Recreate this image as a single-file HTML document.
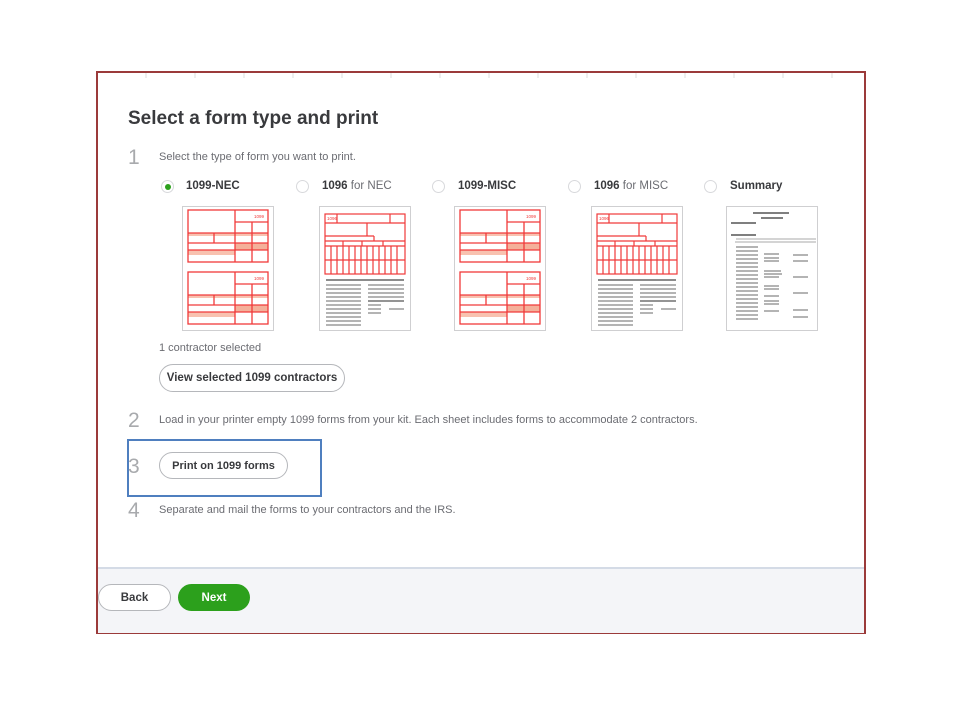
<!DOCTYPE html>
<html><head><meta charset="utf-8"><style>
body{margin:0;width:960px;height:720px;background:#fff;position:relative;overflow:hidden;font-family:"Liberation Sans",sans-serif;color:#393a3d}
.a{position:absolute;white-space:nowrap}
.frame{position:absolute;left:96px;top:71px;width:766px;height:559px;border:2px solid #9b3a3a;background:#fff}
.foot{position:absolute;left:98px;top:567px;width:766px;height:64px;background:#f4f5f8;border-top:2px solid #d4dbe6}
.num{font-size:21px;color:#a8aaad;font-weight:300}
.t{font-size:11px;color:#6b6c72}
.btn{position:absolute;border:1.5px solid #b5b7bb;border-radius:15px;background:#fff;font-size:11.5px;font-weight:bold;color:#393a3d;box-sizing:border-box;display:flex;align-items:center;justify-content:center}
.rad{position:absolute;width:13px;height:13px;border:1px solid #d8d9dc;border-radius:50%;box-sizing:border-box;background:#fff}
.lab{font-size:11.5px;font-weight:bold;color:#393a3d}
.lab span{font-weight:normal;color:#6b6c72}
.th{position:absolute;width:92px;height:125px;border:1.5px solid #cfcfd1;box-sizing:border-box;background:#fff}
</style></head><body>
<div class="frame"></div>
<div class="foot"></div>
<svg class="a" style="left:98px;top:73px" width="764" height="6"><g stroke="#ddd" stroke-width="1">
<line x1="48" y1="0" x2="48" y2="5"/><line x1="97" y1="0" x2="97" y2="5"/><line x1="146" y1="0" x2="146" y2="5"/><line x1="195" y1="0" x2="195" y2="5"/><line x1="244" y1="0" x2="244" y2="5"/><line x1="293" y1="0" x2="293" y2="5"/><line x1="342" y1="0" x2="342" y2="5"/><line x1="391" y1="0" x2="391" y2="5"/><line x1="440" y1="0" x2="440" y2="5"/><line x1="489" y1="0" x2="489" y2="5"/><line x1="538" y1="0" x2="538" y2="5"/><line x1="587" y1="0" x2="587" y2="5"/><line x1="636" y1="0" x2="636" y2="5"/><line x1="685" y1="0" x2="685" y2="5"/><line x1="734" y1="0" x2="734" y2="5"/></g></svg>

<div class="a" style="left:128px;top:108px;font-size:19px;font-weight:bold;color:#393a3d">Select a form type and print</div>
<div class="a num" style="left:128px;top:146px">1</div>
<div class="a t" style="left:159px;top:151px">Select the type of form you want to print.</div>

<div class="rad" style="left:161px;top:180px;"><div style="position:absolute;left:3px;top:3px;width:6px;height:6px;border-radius:50%;background:#2ca01c"></div></div>
<div class="a lab" style="left:186px;top:180px">1099-NEC</div>
<div class="rad" style="left:296px;top:180px"></div>
<div class="a lab" style="left:322px;top:180px">1096 <span>for NEC</span></div>
<div class="rad" style="left:432px;top:180px"></div>
<div class="a lab" style="left:458px;top:180px">1099-MISC</div>
<div class="rad" style="left:568px;top:180px"></div>
<div class="a lab" style="left:594px;top:180px">1096 <span>for MISC</span></div>
<div class="rad" style="left:704px;top:180px"></div>
<div class="a lab" style="left:730px;top:180px">Summary</div>

<svg width="0" height="0" style="position:absolute"><defs>
<g id="f99"><rect x="6" y="27" width="80" height="3" fill="#f8c2b0"/><rect x="53" y="37" width="33" height="7" fill="#f4b09a"/><rect x="6" y="44" width="47" height="5" fill="#f8c2b0"/>
<g fill="none" stroke="#f03a3a" stroke-width="1.3"><rect x="6" y="4" width="80" height="52"/><line x1="53" y1="4" x2="53" y2="56"/><line x1="70" y1="16" x2="70" y2="56"/><line x1="53" y1="16" x2="86" y2="16"/><line x1="6" y1="27" x2="86" y2="27"/><line x1="6" y1="37" x2="86" y2="37"/><line x1="6" y1="44" x2="86" y2="44"/><line x1="32" y1="27" x2="32" y2="37"/></g>
<text x="72" y="12" font-size="4.5" fill="#f03a3a" font-family="Liberation Sans">1099</text></g>
<g id="f96"><g fill="none" stroke="#f03a3a" stroke-width="1.2"><rect x="6" y="8" width="80" height="60"/><line x1="18" y1="8" x2="18" y2="17"/><line x1="6" y1="17" x2="86" y2="17"/><line x1="71" y1="8" x2="71" y2="17"/><line x1="48" y1="17" x2="48" y2="30"/><line x1="6" y1="30" x2="55" y2="30"/><line x1="55" y1="30" x2="55" y2="35"/><line x1="6" y1="35" x2="86" y2="35"/><line x1="6" y1="40" x2="86" y2="40"/><line x1="24" y1="35" x2="24" y2="40"/><line x1="43" y1="35" x2="43" y2="40"/><line x1="64" y1="35" x2="64" y2="40"/><line x1="6" y1="54" x2="86" y2="54"/><path d="M12 40V68M18 40V68M24 40V68M30 40V68M36 40V68M42 40V68M48 40V68M54 40V68M60 40V68M66 40V68M72 40V68M78 40V68"/></g>
<text x="8" y="14" font-size="4.5" fill="#f03a3a" font-family="Liberation Sans">1096</text>
<g stroke="#888" stroke-width="1.2"><line x1="7" y1="74" x2="85" y2="74" stroke="#666" stroke-width="1.6"/>
<path d="M7 79H42M7 83H42M7 87H42M7 91H42M7 95H42M7 99H42M7 103H42M7 107H42M7 111H42M7 115H42M7 119H42M49 79H85M49 83H85M49 87H85M49 91H85M49 99H62M49 103H62M49 107H62M70 103H85"/><line x1="49" y1="95" x2="85" y2="95" stroke="#555"/></g></g>
<g id="fs" stroke="#888" stroke-width="1.2"><path d="M27 7H63M35 12H57M5 17H30M5 29H30" stroke="#555" stroke-width="1.4"/><path d="M10 33H90M9 36H90" stroke="#aaa" stroke-width="1"/>
<path d="M10 41H32M10 45H32M10 49H32M10 53H32M10 57H32M10 61H32M10 65H32M10 69H32M10 73H32M10 77H32M10 81H32M10 85H32M10 89H32M10 93H32M10 97H32M10 101H32M10 105H32M10 109H32M10 113H32M38 48H53M38 52H53M38 55H53M38 65H55M38 68H56M38 71H53M38 80H53M38 83H53M38 90H53M38 95H53M38 98H53M38 105H53M67 49H82M67 55H82M67 71H82M67 87H82M67 104H82M67 111H82"/></g>
</defs></svg>

<div class="th" style="left:182px;top:206px"><svg width="92" height="125" style="position:absolute;left:-1px;top:-1px"><use href="#f99"/><use href="#f99" y="62"/></svg></div>
<div class="th" style="left:319px;top:206px"><svg width="92" height="125" style="position:absolute;left:-1px;top:-1px"><use href="#f96"/></svg></div>
<div class="th" style="left:454px;top:206px"><svg width="92" height="125" style="position:absolute;left:-1px;top:-1px"><use href="#f99"/><use href="#f99" y="62"/></svg></div>
<div class="th" style="left:591px;top:206px"><svg width="92" height="125" style="position:absolute;left:-1px;top:-1px"><use href="#f96"/></svg></div>
<div class="th" style="left:726px;top:206px"><svg width="92" height="125" style="position:absolute;left:-1px;top:-1px"><use href="#fs"/></svg></div>

<div class="a t" style="left:159px;top:342px">1 contractor selected</div>
<div class="btn" style="left:159px;top:364px;width:186px;height:28px">View selected 1099 contractors</div>

<div class="a num" style="left:128px;top:409px">2</div>
<div class="a t" style="left:159px;top:414px">Load in your printer empty 1099 forms from your kit. Each sheet includes forms to accommodate 2 contractors.</div>

<div class="a" style="left:127px;top:439px;width:191px;height:54px;border:2px solid #4f7fbf"></div>
<div class="a num" style="left:128px;top:455px">3</div>
<div class="btn" style="left:159px;top:452px;width:129px;height:27px;font-size:11px">Print on 1099 forms</div>

<div class="a num" style="left:128px;top:499px">4</div>
<div class="a t" style="left:159px;top:504px">Separate and mail the forms to your contractors and the IRS.</div>

<div class="btn" style="left:98px;top:584px;width:73px;height:27px;border-radius:14px">Back</div>
<div class="btn" style="left:178px;top:584px;width:72px;height:27px;border:none;background:#2ca01c;color:#fff;border-radius:14px">Next</div>
</body></html>
